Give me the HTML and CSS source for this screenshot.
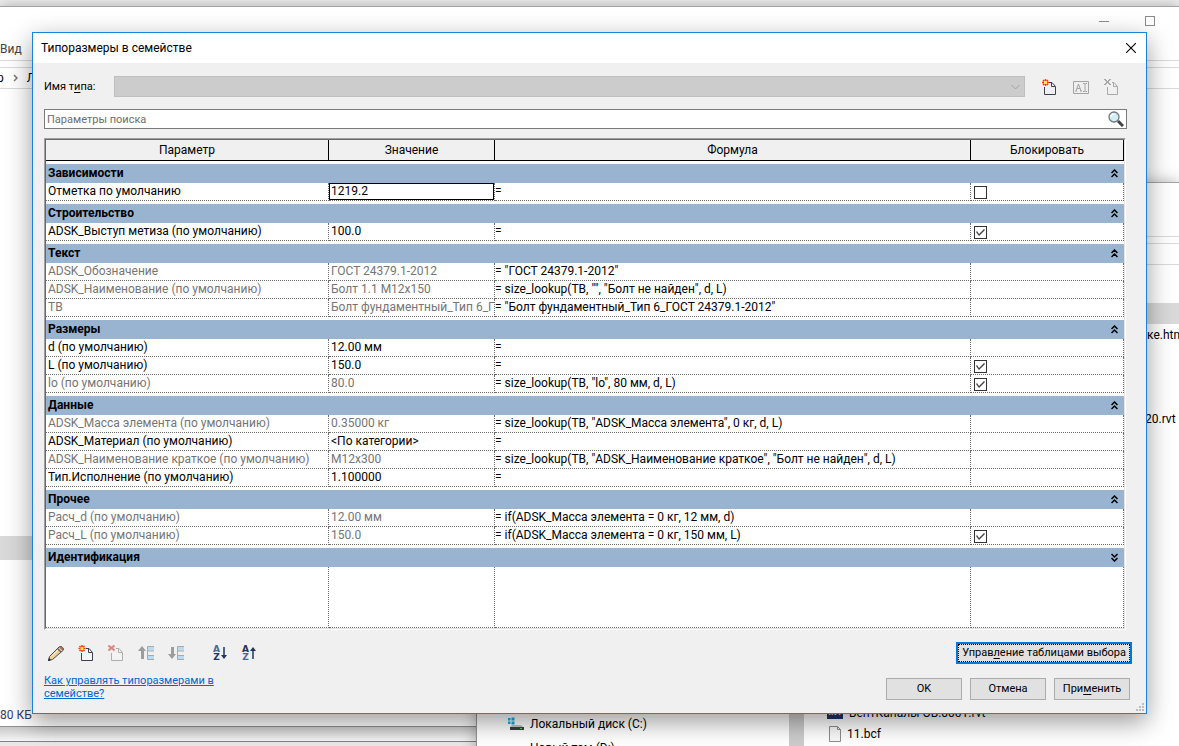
FILE: index.html
```html
<!DOCTYPE html>
<html lang="ru">
<head>
<meta charset="utf-8">
<title>Типоразмеры в семействе</title>
<link rel="stylesheet" href="styles.css">
</head>
<body>
<main class="desktop">

  <section class="explorer back-window" aria-label="Проводник">
    <header class="caption">
      <span class="tab">Вид</span>
      <svg class="win-icon" viewBox="0 0 10 10"><path d="M0 5.500h10" stroke="#8a8a8a"/></svg>
      <svg class="win-icon" viewBox="0 0 10 10"><rect x=".5" y=".5" width="9" height="9" fill="none" stroke="#8a8a8a"/></svg>
    </header>
    <nav class="address"><span>р</span><svg class="crumb" viewBox="0 0 5 8"><path d="M1 1l3 3-3 3" fill="none" stroke="#777" stroke-width="1.500"/></svg><span>Л</span></nav>
    <div class="back-body">
      <div class="back-selection"></div>
      <span class="file-size">80 КБ</span>
    </div>
  </section>
  <div class="lower-window"></div>

  <section class="explorer front-window" aria-label="Файлы">
    <header class="caption"></header>
    <nav class="address"></nav>
    <div class="front-body">
      <ul class="drives">
        <li><svg class="drive-icon" viewBox="0 0 16 14"><path d="M0 1h2.500v2.500H0zM3.500 0.500h3v3h-3zM0 4.500h2.500V7H0zM3.500 4.500h3v3h-3z" fill="#0fb0e6"/><path d="M4 8h9l2 2H2z" fill="#c3c6c9"/><path d="M2 10h14v3H2z" fill="#3d4043"/><path d="M12 11h2v1h-2z" fill="#35e83a"/></svg>Локальный диск (C:)</li>
        <li><svg class="drive-icon" viewBox="0 0 16 14"><path d="M4 8h9l2 2H2z" fill="#c3c6c9"/><path d="M2 10h14v3H2z" fill="#3d4043"/></svg>Новый том (D:)</li>
      </ul>
      <div class="scroll"></div>
      <ul class="files">
        <li class="file-selected"></li>
        <li class="file-html">ке.html</li>
        <li class="file-rvt">20.rvt</li>
        <li class="file-vent"><span class="rvt-badge">RVT</span>ВентКаналы ОВ.0001.rvt</li>
        <li class="file-bcf"><svg class="page-icon" viewBox="0 0 12 16"><path d="M.5.5h8l3 3v12H.5z" fill="#fafafa" stroke="#8d8d8d"/><path d="M8.500.5v3h3" fill="none" stroke="#8d8d8d"/></svg>11.bcf</li>
      </ul>
    </div>
  </section>

  <section class="dialog" role="dialog" aria-labelledby="dialog-title">
    <header class="titlebar">
      <h1 id="dialog-title">Типоразмеры в семействе</h1>
      <button class="icon-button" aria-label="Закрыть"><svg class="close-icon" viewBox="0 0 10 10"><path d="M0 0l10 10M10 0L0 10" stroke="#000" stroke-width="1.100"/></svg></button>
    </header>

    <div class="content">
      <div class="type-row">
        <label for="type-name">Имя т<u>и</u>па:</label>
        <div class="select-wrap">
          <select id="type-name" disabled><option></option></select>
          <svg class="select-arrow" viewBox="0 0 9 6"><path d="M.5 1l4 4 4-4" fill="none" stroke="#a2a2a2"/></svg>
        </div>
        <div class="type-tools">
          <button class="icon-button" aria-label="Новый тип"><svg class="icon" viewBox="0 0 16 16"><path d="M2.500 7.500V3.500h7l4 4v8h-11z" fill="#eef0f6"/><path d="M2.500 8v7.500h11V8M7 3.500h3M9.500 4v3.500h4M10 3.500l3.500 4" fill="none" stroke="#3c3f4c"/><path d="M3.500 0v7M0 3.500h7M1 1l5 5M6 1L1 6" stroke="#e8420f" stroke-width="1.500"/><path d="M2 2h3v3H2z" fill="#ffe94e"/></svg></button>
          <button class="icon-button" aria-label="Переименовать" disabled><svg class="icon" viewBox="0 0 16 16"><path d="M.5 2.500h15v12H.5z" fill="#efefef" stroke="#a4a4a4"/><path d="M3 12l2.500-7L8 12M4 9.500h3M2 12h2M7 12h2M10 4.500h1.500l.5.500.500-.500H14M12 5v7M10 12.500h1.500l.5-.500.500.500H14" fill="none" stroke="#a4a4a4"/></svg></button>
          <button class="icon-button" aria-label="Удалить тип" disabled><svg class="icon" viewBox="0 0 16 16"><path d="M3.500 8v7.500h10V8M8 3.500h2M9.500 4v3.500h4M10 3.500l3.500 4" fill="none" stroke="#a8a8a8"/><path d="M0 0h2v1H0zM5 0h2v1H5zM1 1h2v1H1zM4 1h2v1H4zM2 2h3v1H2zM2 3h3v1H2zM1 4h2v1H1zM4 4h2v1H4zM0 5h2v1H0zM5 5h2v1H5z" fill="#a8a8a8"/></svg></button>
        </div>
      </div>

      <div class="search">
        <input type="search" placeholder="Параметры поиска" aria-label="Параметры поиска">
        <svg class="icon" viewBox="0 0 16 16"><path d="M10 10l5 5" stroke="#444" stroke-width="3"/><circle cx="6" cy="6" r="5" fill="#d3edf4" stroke="#70777d" stroke-width="1.300"/><path d="M3 6a3 3 0 013-3" fill="none" stroke="#fff" stroke-width="1.500"/></svg>
      </div>

      <div class="grid-frame">
        <table class="grid">
          <colgroup><col class="col-name"><col class="col-value"><col class="col-formula"><col class="col-lock"></colgroup>
          <thead><tr><th>Параметр</th><th>Значение</th><th>Формула</th><th>Блокировать</th></tr></thead>
          <tbody id="rows"></tbody>
        </table>
      </div>

      <footer class="footer">
        <div class="tools-row">
          <button class="icon-button" aria-label="Изменить параметр"><svg class="icon" viewBox="0 0 16 16"><path d="M.5 15.500l1-4L11.500 1.500h2l2 2v1.500L4.500 14.500z" fill="#ead0a0" stroke="#4d4a48"/><path d="M11 2.500l1-1h2l1.500 1.500v1.500l-1 1z" fill="#a56e66"/><path d="M9.500 3.500l3.500 3.500" stroke="#666" stroke-width="1.500"/><path d="M3.500 11.500l6.500-6.500" stroke="#fff1cd"/><path d="M0 16l1-3 2 2z" fill="#222"/></svg></button>
          <button class="icon-button" aria-label="Новый параметр"><svg class="icon" viewBox="0 0 16 16"><path d="M3.500 7.500V3.500h7l4 4v8h-11z" fill="#f4f5f8"/><path d="M3.500 8v7.500h11V8M8 3.500h3M10.500 4v3.500h4M11 3.500l3.500 4" fill="none" stroke="#3c3f4c"/><path d="M4 0v7M.5 3.500h7M1.500 1l5 5M6.500 1l-5 5" stroke="#e8420f" stroke-width="1.500"/><path d="M2.500 2h3v3h-3z" fill="#ffe94e"/></svg></button>
          <button class="icon-button" aria-label="Удалить параметр" disabled><svg class="icon" viewBox="0 0 16 16"><path d="M3.500 8v7.500h11V8M8 3.500h3M10.500 4v3.500h4M11 3.500l3.500 4" fill="#f3f3f3" stroke="#aeaeae"/><path d="M.5.500l6 5M6.500.500l-6 5" stroke="#d9877f" stroke-width="2"/></svg></button>
          <button class="icon-button" aria-label="Переместить вверх" disabled><svg class="icon" viewBox="0 0 16 16"><path d="M0 6l4-5 4 5H6v8H3V6z" fill="#9c9c9c"/><path d="M3 6h1v8H3z" fill="#78abcf"/><path d="M10 2h6v3.500h-6zM10 11h6v3h-6z" fill="#b9dcf5"/><path d="M16 1.500H9.500v13H16M9.500 6H16M9.500 10.500H16" fill="none" stroke="#a9a9a9"/></svg></button>
          <button class="icon-button" aria-label="Переместить вниз" disabled><svg class="icon" viewBox="0 0 16 16"><path d="M0 9l4 5 4-5H6V2H3v7z" fill="#9c9c9c"/><path d="M3 2h1v7H3z" fill="#78abcf"/><path d="M10 2h6v3.500h-6zM10 11h6v3h-6z" fill="#b9dcf5"/><path d="M16 1.500H9.500v13H16M9.500 6H16M9.500 10.500H16" fill="none" stroke="#a9a9a9"/></svg></button>
          <button class="icon-button sort-first" aria-label="Сортировать по возрастанию"><span class="az"><span class="az-a">A</span><span class="az-z">Z</span></span><svg class="sort-arrow" viewBox="0 0 6 14"><path d="M3 1v10" stroke="#1f355f" stroke-width="1.500"/><path d="M0 9h6l-3 4z" fill="#1f355f"/></svg></button>
          <button class="icon-button" aria-label="Сортировать по убыванию"><span class="az"><span class="az-z">A</span><span class="az-a">Z</span></span><svg class="sort-arrow" viewBox="0 0 6 14"><path d="M3 3v10" stroke="#1f355f" stroke-width="1.500"/><path d="M0 5h6L3 1z" fill="#1f355f"/></svg></button>
          <button class="push manage"><span>Управ<u>л</u>ение таблицами выбора</span></button>
        </div>
        <div class="actions-row">
          <a class="help" href="#help">Как управлять типоразмерами в семействе?</a>
          <button class="push">OK</button>
          <button class="push">Отмена</button>
          <button class="push">При<u>м</u>енить</button>
        </div>
      </footer>
    </div>
    <svg class="grip" viewBox="0 0 8 8"><path d="M6 0h2v2H6zM3 3h2v2H3zM6 3h2v2H6zM0 6h2v2H0zM3 6h2v2H3zM6 6h2v2H6z" fill="#bdbdbd"/></svg>
  </section>
</main>
<script src="app.js"></script>
</body>
</html>
```
FILE: styles.css
```css
* { box-sizing: border-box; }

body {
  margin: 0;
  font: 12px/16px Roboto, "Noto Sans", sans-serif;
  color: #000;
}

button, input, select { font: inherit; color: inherit; }
ul { list-style: none; margin: 0; padding: 0; }

.desktop {
  position: relative;
  height: 100vh;
  overflow: hidden;
  background: #f0f0f0;
}

/* Windows behind the dialog */
.explorer {
  position: absolute;
  display: flex;
  flex-direction: column;
  background: #fff;
  border-top: 1px solid #a3a3a3;
  box-shadow: 0 0 14px rgba(0, 0, 0, 0.3);
}
.back-window { top: 6px; left: 0; right: 0; bottom: 19px; border-bottom: 1px solid #8f8f8f; }
.front-window { top: 182px; left: 476px; right: 0; bottom: -14px; border-left: 1px solid #8f8f8f; }

.caption {
  display: flex;
  gap: 36px;
  height: 54px;
  padding: 9px 24px 0 0;
  border-bottom: 1px solid #d9d9d9;
}
.tab { margin-right: auto; padding-top: 25px; color: #444; }
.win-icon { width: 10px; height: 10px; }
.address {
  display: flex;
  align-items: center;
  gap: 9px;
  height: 22px;
  margin-top: 6px;
  border: solid #d9d9d9;
  border-width: 1px 0;
}
.address span:first-child { margin-left: -3px; }
.crumb { width: 5px; height: 8px; }

.back-body { flex: 1; display: flex; flex-direction: column; justify-content: flex-end; align-items: flex-start; }
.back-selection { width: 40%; height: 24px; margin-bottom: 147px; background: #d9d9d9; }
.file-size { height: 19px; color: #333a66; }
.lower-window {
  position: absolute;
  left: 0; right: 0; bottom: 0;
  height: 19px;
  border-right: 1px solid #8f8f8f;
  background: linear-gradient(#c9c9c9, #f6f6f6 14px, #808088 14px, #808088 15px, #e8e8e8 15px);
}

.front-body { flex: 1; display: flex; min-height: 0; }
.drives { width: 312px; display: flex; flex-direction: column; justify-content: flex-end; }
.drives li { display: flex; align-items: center; gap: 6px; height: 24px; padding-left: 31px; font-size: 12px; }
.drive-icon { width: 16px; height: 14px; }
.scroll { width: 15px; background: #cdcdcd; }
.files { flex: 1; display: grid; grid-auto-rows: 21px; padding-top: 38px; margin-right: -40px; overflow: hidden; }
.files li { display: flex; align-items: center; gap: 6px; white-space: nowrap; }
.file-selected { background: #d9d9d9; }
.file-html { grid-row: 2; padding-left: 343px; }
.file-rvt { grid-row: 6; padding-left: 341px; }
.file-vent { grid-row: 20; padding-left: 23px; }
.file-bcf { grid-row: 21; padding-left: 25px; }
.rvt-badge { width: 16px; height: 12px; font: bold 7px/12px "Open Sans", sans-serif; text-align: center; color: #fff; background: #1c3563; }
.page-icon { width: 12px; height: 16px; }

/* Dialog */
.dialog {
  position: absolute;
  inset: 32px;
  display: flex;
  flex-direction: column;
  border: 1px solid #1883d7;
  background: #f0f0f0;
  box-shadow: 0 8px 24px rgba(0, 0, 0, 0.4);
}
.titlebar {
  display: flex;
  align-items: center;
  justify-content: space-between;
  height: 30px;
  padding: 0 10px 0 8px;
  background: #fff;
}
h1 { margin: 0; font-size: 12px; font-weight: 400; }
.icon-button { display: flex; align-items: center; padding: 0; border: 0; background: none; }
.close-icon { width: 10px; height: 10px; }
.icon { width: 16px; height: 16px; flex: none; display: block; }

.content { flex: 1; display: flex; flex-direction: column; min-height: 0; padding: 13px 19px 0 11px; }
.type-row { display: flex; align-items: center; height: 21px; font-size: 11px; }
.type-row label { width: 70px; }
u { text-underline-offset: 2px; }
.select-wrap { flex: 1; display: grid; align-items: center; }
.select-wrap > * { grid-area: 1 / 1; }
.select-wrap select { width: 100%; height: 21px; appearance: none; border: 1px solid #bfbfbf; border-radius: 0; background: #ccc; opacity: 1; }
.select-arrow { width: 9px; height: 6px; justify-self: end; margin-right: 5px; }
.type-tools { display: flex; gap: 15px; margin: 0 7px 0 17px; }

.search { display: flex; align-items: center; height: 20px; margin-top: 12px; padding-right: 2px; border: 1px solid #7a7a7a; background: #fff; }
.search input { flex: 1; min-width: 0; height: 18px; padding: 0 2px; border: 0; outline: 0; background: none; font-size: 11px; }
.search input::placeholder { color: #6d6d6d; }

.grid-frame {
  flex: 1;
  min-height: 0;
  margin: 9px 1px 0 0;
  border: 1px solid;
  border-color: #a0a0a0 #fff #fff #a0a0a0;
}
.grid {
  width: 100%;
  height: 100%;
  table-layout: fixed;
  border-collapse: separate;
  border-spacing: 0;
  border: 1px solid;
  border-color: #696969 #e3e3e3 #e3e3e3 #696969;
  background: #fff;
}
.col-name { width: 283px; }
.col-value { width: 166px; }
.col-lock { width: 153px; }
.grid th { height: 21px; padding: 0; font-weight: 400; background: #f0f0f0; border: solid #000; border-width: 0 1px 1px 0; }
.grid td { height: 18px; padding: 0 2px; border: dotted #6d6d6d; border-width: 0 1px 1px 0; white-space: nowrap; overflow: hidden; line-height: 16px; vertical-align: top; }
.grid td:nth-child(3) { padding-left: 0; }
.grid td:nth-child(4) { padding: 3px 0 0 3px; }
.grid .readonly td:nth-child(-n+2) { color: #757575; }
.grid .group td { height: 22px; padding: 0; border: 0; border-top: 3px solid #fff; background: #99b4d1; font-weight: 700; }
.group-head { display: flex; align-items: center; justify-content: space-between; height: 18px; padding: 0 6px 0 2px; }
.chevrons { width: 7px; height: 9px; display: block; }
.grid .edit { padding: 0; }
.edit input { display: block; width: 100%; height: 17px; padding: 0 1px 1px; border: 1px solid #000; outline: 0; }
.grid .filler td { height: auto; }

.check { appearance: none; display: block; width: 13px; height: 13px; margin: 0; border: 1px solid #333; background: #fff; }
.check:checked::before {
  content: "";
  display: block;
  width: 11px;
  height: 11px;
  background: #444;
  clip-path: polygon(1px 5px, 2px 4px, 4px 7px, 9px 2px, 10px 3px, 4px 9px);
}

.footer { padding: 11px 0 0; }
.tools-row { display: flex; align-items: center; gap: 14px; height: 23px; padding-left: 4px; }
.tools-row .sort-first { margin-left: 14px; }
.az { display: flex; flex-direction: column; width: 9px; font: bold 9px/8px "DejaVu Sans", sans-serif; }
.az-a { color: #4a6898; }
.az-z { color: #1f355f; }
.sort-arrow { width: 6px; height: 14px; }

.push { width: 76px; height: 22px; padding: 0; border: 1px solid #adadad; background: #e1e1e1; font-size: 11px; line-height: 16px; }
.tools-row .manage { width: auto; margin: 0 -5px 0 auto; padding: 1px; border: 2px solid #0078d7; }
.manage span { display: block; padding: 0 3px; outline: 1px dotted #000; }
.actions-row { display: flex; gap: 8px; height: 49px; margin-right: -3px; }
.actions-row .push { margin-top: 14px; }
.help { width: 180px; margin: 10px auto 0 0; font-size: 11px; line-height: 13px; color: #0066cc; }

.grip { position: absolute; right: 2px; bottom: 2px; width: 8px; height: 8px; }
```
FILE: app.js
```js
// Row: [name, value, formula, lock, readonly]; lock is null (no box), false or true.
const groups = [
  ["Зависимости", [["Отметка по умолчанию", "1219.2", "=", false, false]]],
  ["Строительство", [["ADSK_Выступ метиза (по умолчанию)", "100.0", "=", true, false]]],
  ["Текст", [
    ["ADSK_Обозначение", "ГОСТ 24379.1-2012", '= "ГОСТ 24379.1-2012"', null, true],
    ["ADSK_Наименование (по умолчанию)", "Болт 1.1 М12х150", '= size_lookup(ТВ, "", "Болт не найден", d, L)', null, true],
    ["ТВ", "Болт фундаментный_Тип 6_Г", '= "Болт фундаментный_Тип 6_ГОСТ 24379.1-2012"', null, true]
  ]],
  ["Размеры", [
    ["d (по умолчанию)", "12.00 мм", "=", null, false],
    ["L (по умолчанию)", "150.0", "=", true, false],
    ["lo (по умолчанию)", "80.0", '= size_lookup(ТВ, "lo", 80 мм, d, L)', true, true]
  ]],
  ["Данные", [
    ["ADSK_Масса элемента (по умолчанию)", "0.35000 кг", '= size_lookup(ТВ, "ADSK_Масса элемента", 0 кг, d, L)', null, true],
    ["ADSK_Материал (по умолчанию)", "<По категории>", "=", null, false],
    ["ADSK_Наименование краткое (по умолчанию)", "М12х300", '= size_lookup(ТВ, "ADSK_Наименование краткое", "Болт не найден", d, L)', null, true],
    ["Тип.Исполнение (по умолчанию)", "1.100000", "=", null, false]
  ]],
  ["Прочее", [
    ["Расч_d (по умолчанию)", "12.00 мм", "= if(ADSK_Масса элемента = 0 кг, 12 мм, d)", null, true],
    ["Расч_L (по умолчанию)", "150.0", "= if(ADSK_Масса элемента = 0 кг, 150 мм, L)", true, true]
  ]],
  ["Идентификация", []]
];

const body = document.getElementById("rows");
const UP = "M.5 4l3-3 3 3M.5 8l3-3 3 3";
const DOWN = "M.5 1l3 3 3-3M.5 5l3 3 3-3";

for (const [title, rows] of groups) {
  const head = body.insertRow();
  head.className = "group";
  const cell = head.insertCell();
  cell.colSpan = 4;
  cell.innerHTML = `<div class="group-head"><span>${title}</span><button class="icon-button" aria-label="${title}"><svg class="chevrons" viewBox="0 0 7 9"><path d="${rows.length ? UP : DOWN}" fill="none" stroke="#000" stroke-width="1.5"/></svg></button></div>`;
  for (const [name, value, formula, lock, readonly] of rows) {
    const row = body.insertRow();
    if (readonly) row.className = "readonly";
    row.insertCell().textContent = name;
    const valueCell = row.insertCell();
    if (value === "1219.2") {
      valueCell.className = "edit";
      const input = document.createElement("input");
      input.type = "text";
      input.value = value;
      input.setAttribute("aria-label", name);
      valueCell.append(input);
    } else {
      valueCell.textContent = value;
    }
    row.insertCell().textContent = formula;
    const lockCell = row.insertCell();
    if (lock !== null) {
      const box = document.createElement("input");
      box.type = "checkbox";
      box.className = "check";
      box.checked = lock;
      box.setAttribute("aria-label", "Блокировать: " + name);
      lockCell.append(box);
    }
  }
}

const filler = body.insertRow();
filler.className = "filler";
for (let i = 0; i < 4; i++) filler.insertCell();
```
